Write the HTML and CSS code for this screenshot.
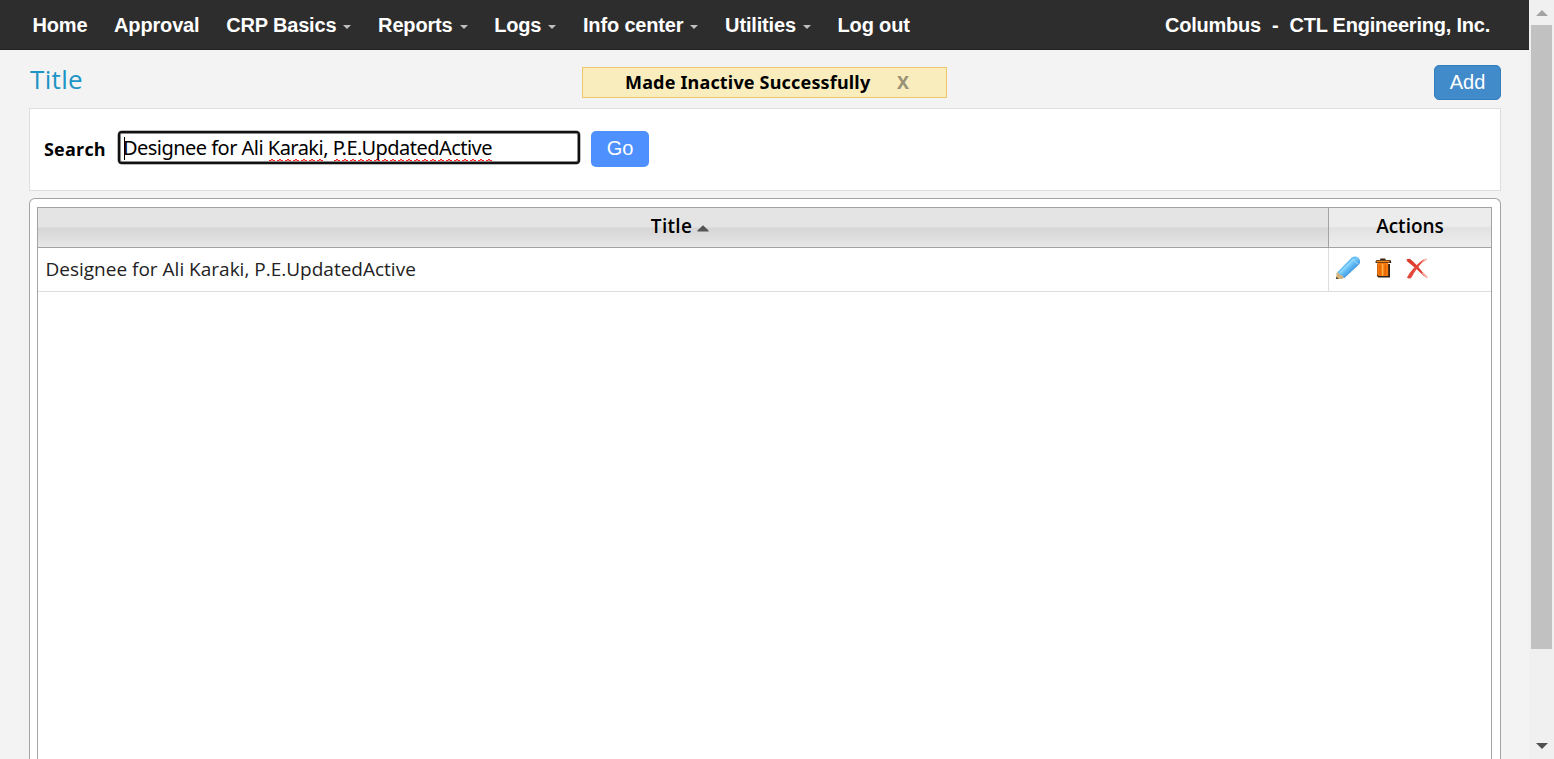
FILE: index.html
```html
<!DOCTYPE html>
<html lang="en">
<head>
<meta charset="utf-8">
<title>Title</title>
<link rel="stylesheet" href="styles.css">
</head>
<body>
<div class="window">
<div class="page">
  <header class="navbar">
    <nav class="menu">
      <a>Home</a>
      <a>Approval</a>
      <a>CRP Basics<i class="caret"></i></a>
      <a>Reports<i class="caret"></i></a>
      <a>Logs<i class="caret"></i></a>
      <a>Info center<i class="caret"></i></a>
      <a>Utilities<i class="caret"></i></a>
      <a>Log out</a>
    </nav>
    <div class="account"><span>Columbus</span><span>-</span><span>CTL Engineering, Inc.</span></div>
  </header>
  <main class="content">
    <div class="heading">
      <h1>Title</h1>
      <div class="notice"><span class="notice-text">Made Inactive Successfully</span><span class="notice-close">X</span></div>
      <button class="add">Add</button>
    </div>
    <section class="search">
      <label>Search</label>
      <div class="field"><i class="cursor"></i><span class="value">Designee for Ali <span class="misspelled">Karaki</span>, <span class="misspelled">P.E.UpdatedActive</span></span></div>
      <button class="go">Go</button>
    </section>
    <section class="panel">
      <div class="grid">
        <div class="row head">
          <div class="cell sorted"><span>Title</span><svg class="sort" width="12" height="7" viewBox="0 0 12 7"><path d="M6 0.3 11.6 5.6V6.5H0.4V5.6Z" fill="#555"/></svg></div>
          <div class="cell"><span>Actions</span></div>
        </div>
        <div class="row">
          <div class="cell"><span class="td-text">Designee for Ali Karaki, P.E.UpdatedActive</span></div>
          <div class="cell actions">
            <svg class="pencil" width="26" height="24" viewBox="0 0 26 24">
              <defs><linearGradient id="p" x1="0" y1="0" x2="1" y2="1"><stop offset=".2" stop-color="#3a9be6"/><stop offset=".45" stop-color="#74cbfa"/><stop offset=".75" stop-color="#2c83da"/></linearGradient></defs>
              <path d="M1 23 1.6 17.3 3.5 15.2 9.4 21 7.5 23Z" fill="#d2b47c"/><path d="M1 23 1.2 20.6 3.8 23Z" fill="#554a38"/>
              <path d="M2.6 16 16.8 1.6Q20.5-.6 23.6 1.9 26.3 5 24.2 8.2L9.2 22.2 7.2 19.6 4.6 18.6Z" fill="url(#p)"/>
              <path d="M5 16.6 18.6 3.4" stroke="#8bd5fa" stroke-width="2"/><path d="M17.4 2.6 23 8.2" stroke="#a8dcf8" stroke-width="1"/>
            </svg>
            <svg class="trash" width="17" height="21" viewBox="0 0 17 21">
              <path d="M5.2 2V.6H10.5V2H15Q16.3 2 16.3 5H.5Q.5 2 2 2Z" fill="#3c2414"/><path d="M1.5 2.7H14.5V4.3H1.5Z" fill="#f58a20"/>
              <path d="M2 6H15V19.5H3.4L2 18Z" fill="#2f2117"/><path d="M2.2 5H13.2V18H4L2.2 17Z" fill="#f7790c"/>
              <path d="M5 7V17.5M10.2 7V17.5" stroke="#d65a05" stroke-width=".9"/><path d="M7.6 6V17.7" stroke="#ffb04c" stroke-width="1.4"/>
            </svg>
            <svg class="remove" width="22" height="21" viewBox="0 0 22 21">
              <path d="M.4 1.2 3.7.7Q10 5 19.5 18L18.4 18.5Q11 11 1.3 3.6Z" fill="#e03c2e"/>
              <path d="M18.5 2 17.2 1.6Q6 10.2 1 19.4L2.2 20.6 5 20.2Q10 10.5 18.5 2Z" fill="#e2473a"/>
              <path d="M16.5 14.8 21.3 19.7" stroke="#f6aaa3" stroke-width="1.8"/><path d="M16.5 3.8 20.5 .8" stroke="#f5a9a0" stroke-width="1.6"/>
            </svg>
          </div>
        </div>
      </div>
    </section>
  </main>
</div>
<aside class="scrollbar"><i class="up"></i><i class="thumb"></i><i class="down"></i></aside>
</div>
</body>
</html>
```
FILE: styles.css
```css
* { box-sizing: border-box; }
body { margin: 0; background: #f3f3f3; font-family: "Open Sans", sans-serif; color: #000; overflow: hidden; }
i { display: block; }
button { padding: 0; margin: 0; }
.window { display: flex; height: 759px; }
.page { flex: 1; display: flex; flex-direction: column; min-width: 0; }
.navbar { flex: none; height: 50px; background: #2d2d2d; border-bottom: 1px solid #222; padding: 1px 39px 0 32.5px; display: flex; justify-content: space-between; color: #fff; font: bold 20px/48px "Liberation Sans", sans-serif; letter-spacing: -.16px; }
.menu { display: flex; gap: 26.65px; }
.menu a { display: flex; align-items: center; white-space: nowrap; }
.caret { margin: 4px 0 0 7px; border: 4px solid transparent; border-top-color: #bfbfbf; border-bottom: 0; }
.account { display: flex; gap: 11px; white-space: nowrap; letter-spacing: -.22px; }
.content { flex: 1; min-height: 0; padding: 0 28px 0 29px; display: flex; flex-direction: column; }
.heading { position: relative; flex: none; height: 58px; display: flex; justify-content: space-between; align-items: flex-start; }
h1 { margin: 11px 0 0 1px; font: 26px/36px "Open Sans", sans-serif; letter-spacing: .35px; color: #1c94c4; }
.notice { position: absolute; left: 553px; top: 17px; width: 365px; height: 31px; border: 1px solid #efc66a; background: #f9edbe; display: flex; padding-left: 42px; white-space: nowrap; }
.notice-text { font: bold 18px/29px "Noto Sans", sans-serif; letter-spacing: .17px; width: 272px; }
.notice-close { font: bold 18px/29px "Noto Sans", sans-serif; color: #9a9277; }
.add { margin-top: 15px; width: 67px; height: 35px; border: 1px solid #357ebd; border-radius: 5px; background: #428bca; color: #fff; font: 20px/33px "Liberation Sans", sans-serif; }
.search { flex: none; height: 83px; background: #fff; border: 1px solid #dedede; display: flex; align-items: flex-start; padding: 21px 0 0 14px; }
label { font: bold 18px/38px "Open Sans", sans-serif; letter-spacing: .2px; width: 74px; }
.field { position: relative; margin-top: 1px; width: 462px; height: 33px; border: 2px solid #111; border-radius: 4px; background: #fff; box-shadow: 0 0 0 .5px #777, inset 0 0 0 1px #8a8a8a; padding: 1px 0 0 3px; display: flex; align-items: center; }
.cursor { position: absolute; left: 4px; top: 4px; width: 1px; height: 23px; background: #000; }
.value { font: 20px/28px "Noto Sans", sans-serif; letter-spacing: -.53px; white-space: pre; }
.misspelled { background: radial-gradient(circle at 4px 5px, transparent 2.5px, #f22 2.6px, #f22 3.6px, transparent 3.7px) 0 100% / 8px 3px repeat-x; }
.go { margin: 1px 0 0 11px; width: 58px; height: 36px; border: 0; border-radius: 5px; background: #4d90fe; color: #fff; font: 20px/34px "Liberation Sans", sans-serif; padding-bottom: 2px; }
.panel { flex: 1; min-height: 0; margin-top: 7px; background: #fff; border: 1px solid #a3a3a3; border-bottom: 0; border-radius: 6px 6px 0 0; padding: 8px 8px 0 7px; display: flex; }
.grid { flex: 1; border: 1px solid #a3a3a3; border-bottom: 0; }
.row { display: grid; grid-template-columns: 1290px 1fr; height: 44px; border-bottom: 1px solid #ddd; }
.cell { display: flex; align-items: center; padding-left: 7.5px; color: #222; }
.cell + .cell { border-left: 1px solid #ddd; }
.td-text { font-size: 19px; white-space: nowrap; padding-bottom: 2px; }
.head { height: 40px; border-bottom-color: #a3a3a3; }
.head .cell { justify-content: center; padding: 0 0 3px; color: #000; font: 600 19px/36px "Open Sans", sans-serif; background: linear-gradient(#ececec 0 48%, #e2e2e2 50%, #ededed); }
.head .sorted { padding-right: 6px; letter-spacing: .3px; background: linear-gradient(#e4e4e4 0 48%, #d6d6d6 52%, #e7e7e7); }
.head .cell + .cell { border-left-color: #a3a3a3; }
.sort { margin: 4px 0 0 5px; }
.cell.actions { align-items: flex-start; padding: 8px 0 0 6px; }
.trash { margin: 2px 0 0 14px; }
.remove { margin: 2px 0 0 14px; }
.scrollbar { flex: none; width: 25px; background: #f0f0f0; padding: 10px 2px 10px 2px; display: flex; flex-direction: column; align-items: center; }
.up { border: 6px solid transparent; border-top: 0; border-bottom-color: #a3a3a3; }
.thumb { margin-top: 9px; width: 21px; height: 624px; background: #c1c1c1; }
.down { margin-top: auto; border: 6px solid transparent; border-bottom: 0; border-top-color: #505050; }
```
